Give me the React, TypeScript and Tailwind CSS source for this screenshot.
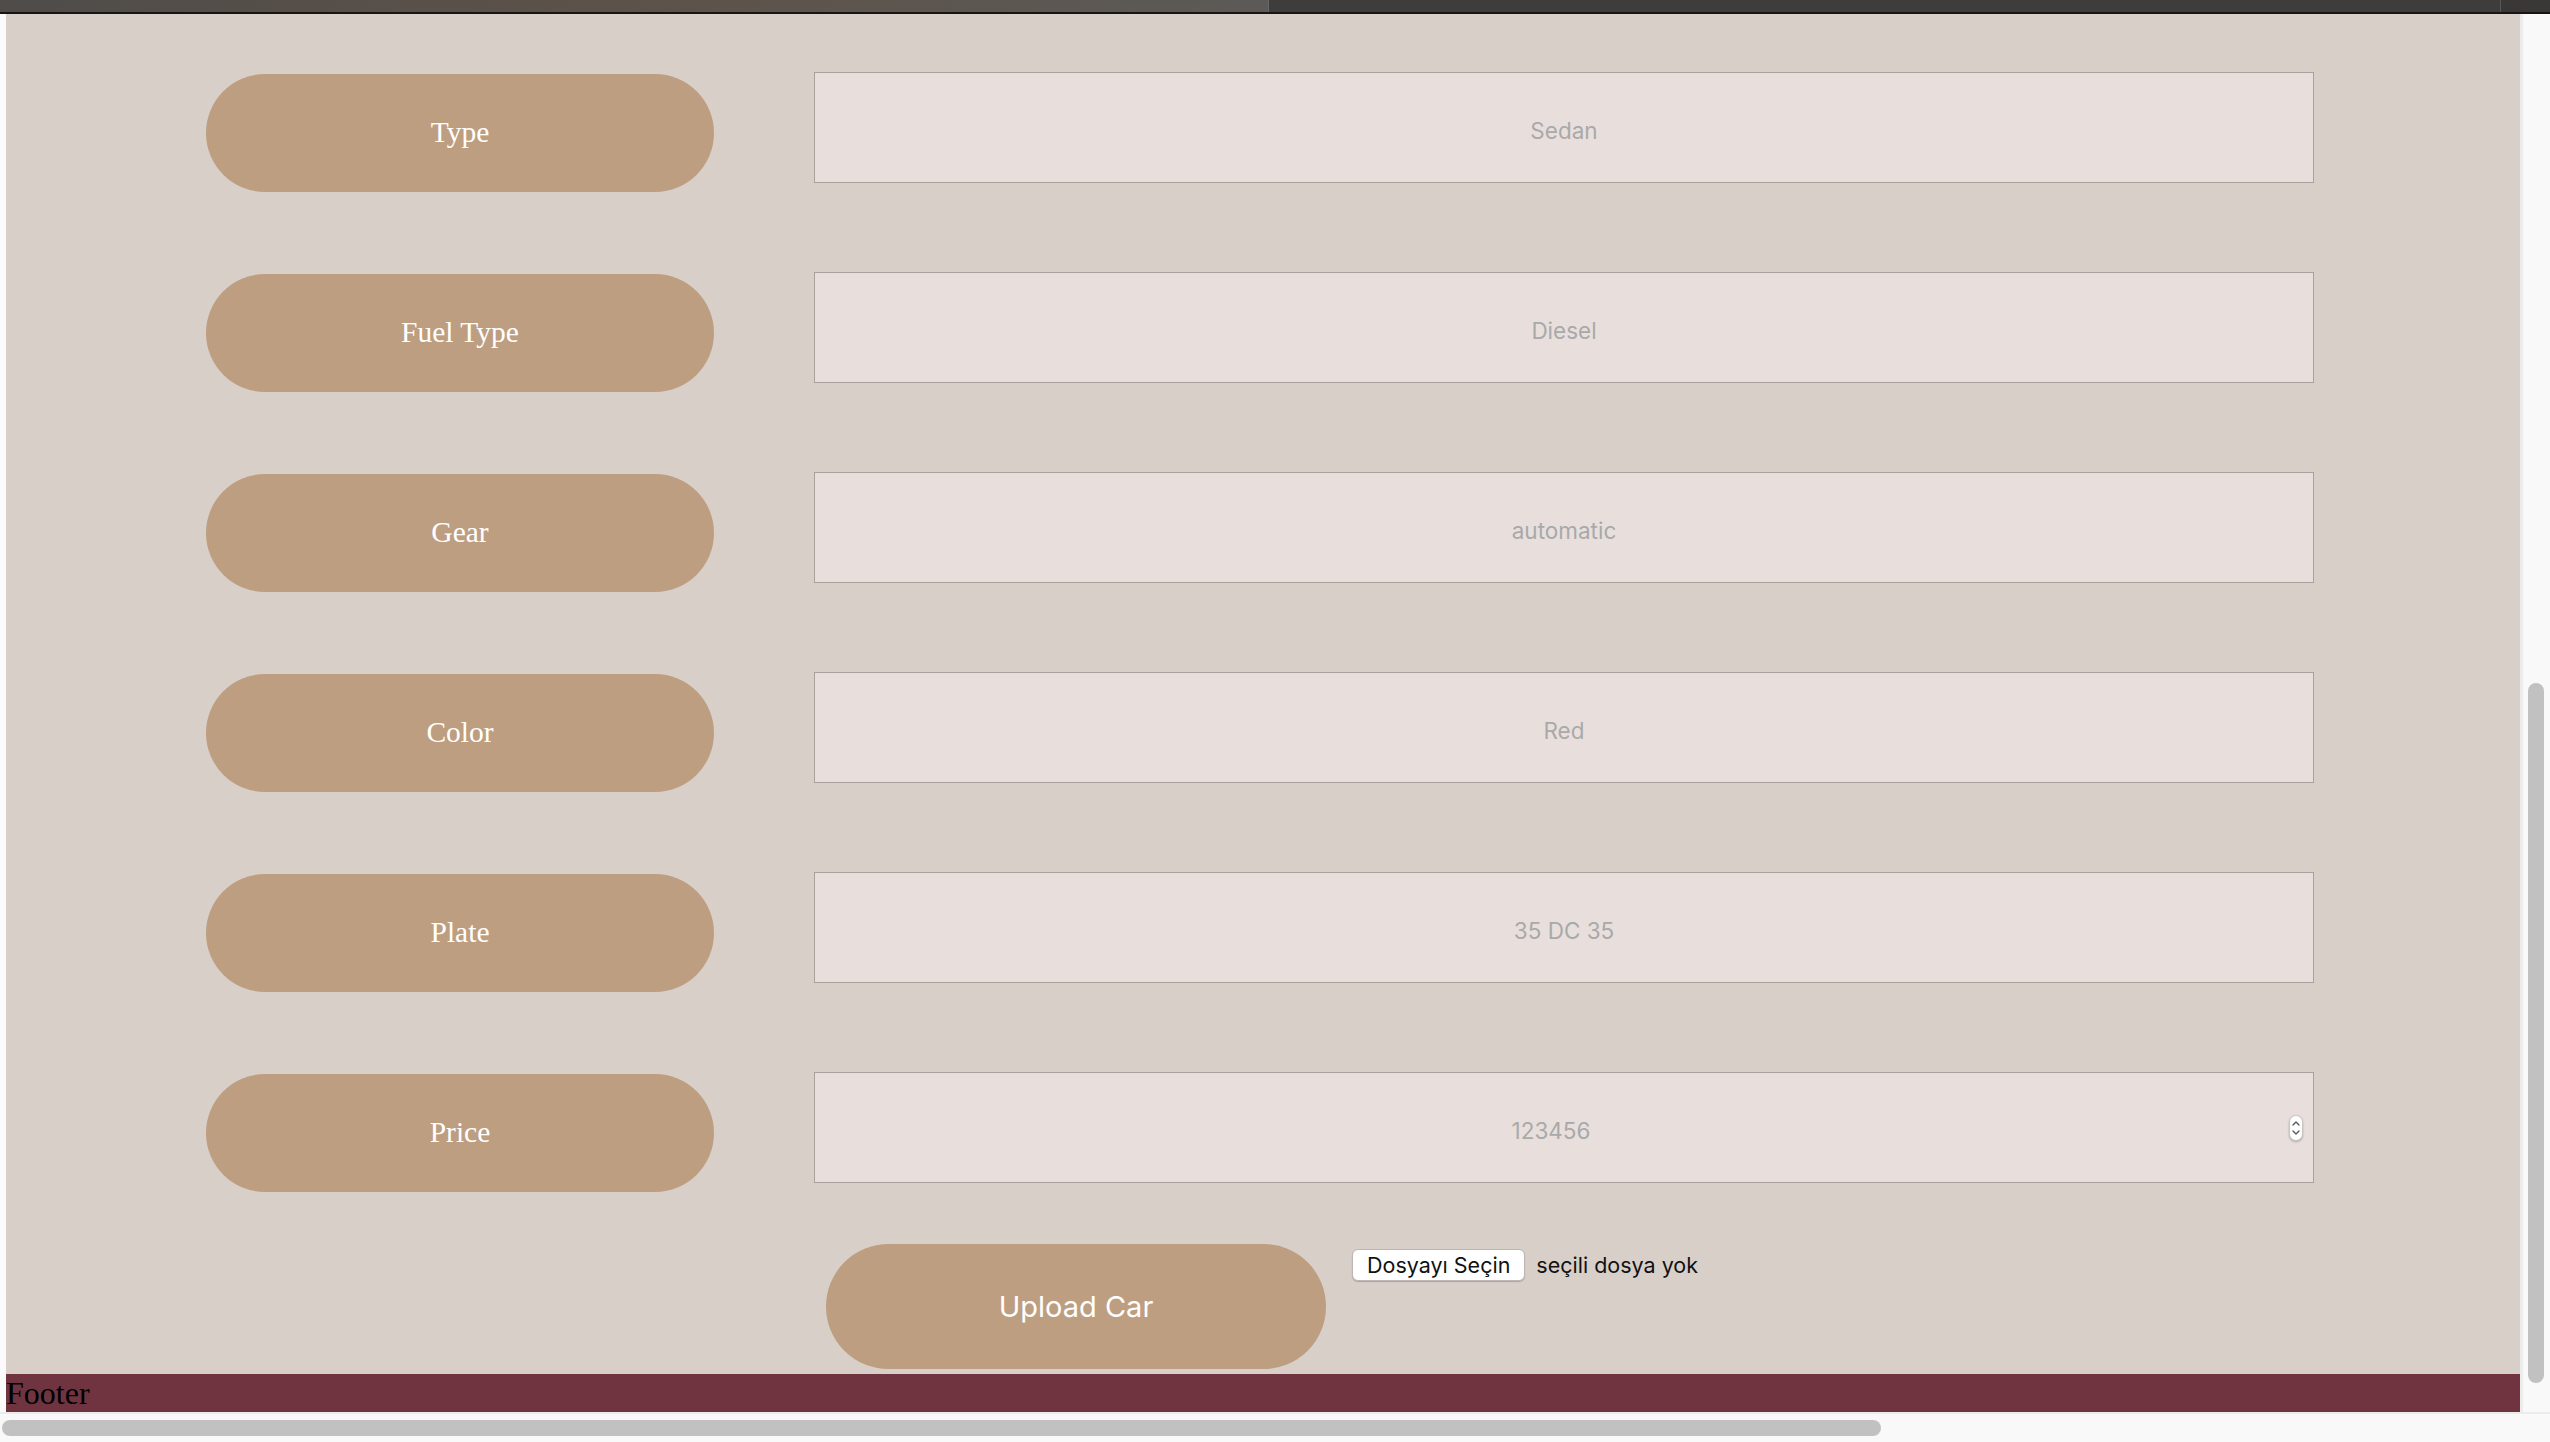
import React from "react";

const fields = [
  { label: "Type", placeholder: "Sedan" },
  { label: "Fuel Type", placeholder: "Diesel" },
  { label: "Gear", placeholder: "automatic" },
  { label: "Color", placeholder: "Red" },
  { label: "Plate", placeholder: "35 DC 35" },
];

const Spinner: React.FC = () => (
  <div className="mr-[10px] ml-[2px] flex h-[26px] w-[14px] items-center justify-center rounded-full border border-[#c9c4c2] bg-white shadow-[0_1px_2px_rgba(0,0,0,0.25)]">
    <svg width="10" height="20" viewBox="0 0 10 20" fill="none">
      <path d="M2 7 L5 4 L8 7" stroke="#555" strokeWidth="1.3" strokeLinecap="round" strokeLinejoin="round" />
      <path d="M2 13 L5 16 L8 13" stroke="#555" strokeWidth="1.3" strokeLinecap="round" strokeLinejoin="round" />
    </svg>
  </div>
);

const Label: React.FC<{ text: string }> = ({ text }) => (
  <div className="mt-[2px] flex h-[118px] w-[508px] shrink-0 items-center justify-center rounded-full bg-[#be9e80] pb-[2px] font-['Liberation_Serif',serif] text-[29.5px] text-white">
    {text}
  </div>
);

export default function App() {
  return (
    <div className="flex h-[1442px] w-[2550px] flex-col overflow-hidden bg-[#f9f9f9]">
      {/* browser chrome strip */}
      <div className="flex h-[14px] shrink-0 border-b-2 border-[#161514]">
        <div className="w-[1268px] bg-gradient-to-r from-[#4f4c49] via-[#5d5249] to-[#5c5a57]" />
        <div className="flex-1 border-l border-[#6a6865] bg-[#3f3d3b]" />
        <div className="w-[50px] border-l border-[#5a5856] bg-[#3a3836]" />
      </div>

      <div className="flex flex-1">
        <div className="w-[6px] bg-[#fbfbfb]" />

        <div className="flex flex-1 flex-col">
          <main className="flex flex-1 flex-col bg-[#d8cfc9] pt-[58px] pb-[5px]">
            <div className="flex flex-col gap-[80px] pl-[200px]">
              {fields.map((f) => (
                <div key={f.label} className="flex items-start gap-[100px]">
                  <Label text={f.label} />
                  <input
                    readOnly
                    placeholder={f.placeholder}
                    className="h-[111px] w-[1500px] border border-[#aaa09c] bg-[#e8dfdd] pt-[6px] text-center font-['Inter',sans-serif] text-[22.5px] outline-none placeholder:text-[#a9a9a9]"
                  />
                </div>
              ))}
              <div className="flex items-start gap-[100px]">
                <Label text="Price" />
                <div className="flex h-[111px] w-[1500px] items-center border border-[#aaa09c] bg-[#e8dfdd]">
                  <input
                    readOnly
                    placeholder="123456"
                    className="h-full min-w-0 flex-1 bg-transparent pt-[6px] text-center font-['Inter',sans-serif] text-[22.5px] outline-none placeholder:text-[#a9a9a9]"
                  />
                  <Spinner />
                </div>
              </div>
            </div>

            <div className="mt-[52px] flex items-start gap-[26px] pl-[820px]">
              <button className="flex h-[125px] w-[500px] items-center justify-center rounded-full bg-[#be9e80] font-['Inter',sans-serif] text-[29px] text-white">
                Upload Car
              </button>
              <div className="mt-[5px] flex items-center gap-[11px] font-['Inter',sans-serif] text-[21.5px] text-[#111]">
                <span className="flex h-[32px] items-center rounded-[6px] border border-[#bdb6b2] bg-white px-[14px] shadow-[0_1px_1px_rgba(0,0,0,0.2)]">
                  Dosyayı Seçin
                </span>
                <span>seçili dosya yok</span>
              </div>
            </div>
          </main>

          <footer className="flex h-[38px] items-center bg-[#703441] font-['Liberation_Serif',serif] text-[32px] leading-none text-black">
            Footer
          </footer>
        </div>

        {/* vertical scrollbar */}
        <div className="w-[30px] border-l-[3px] border-[#ececec] bg-[#f9f9f9] pt-[669px] pl-[5px]">
          <div className="h-[700px] w-[16px] rounded-full bg-[#c1c1c1]" />
        </div>
      </div>

      {/* horizontal scrollbar */}
      <div className="h-[30px] shrink-0 border-t-2 border-[#ececec] bg-[#f9f9f9] pt-[6px] pl-[2px]">
        <div className="h-[16px] w-[1879px] rounded-full bg-[#c1c1c1]" />
      </div>
    </div>
  );
}
